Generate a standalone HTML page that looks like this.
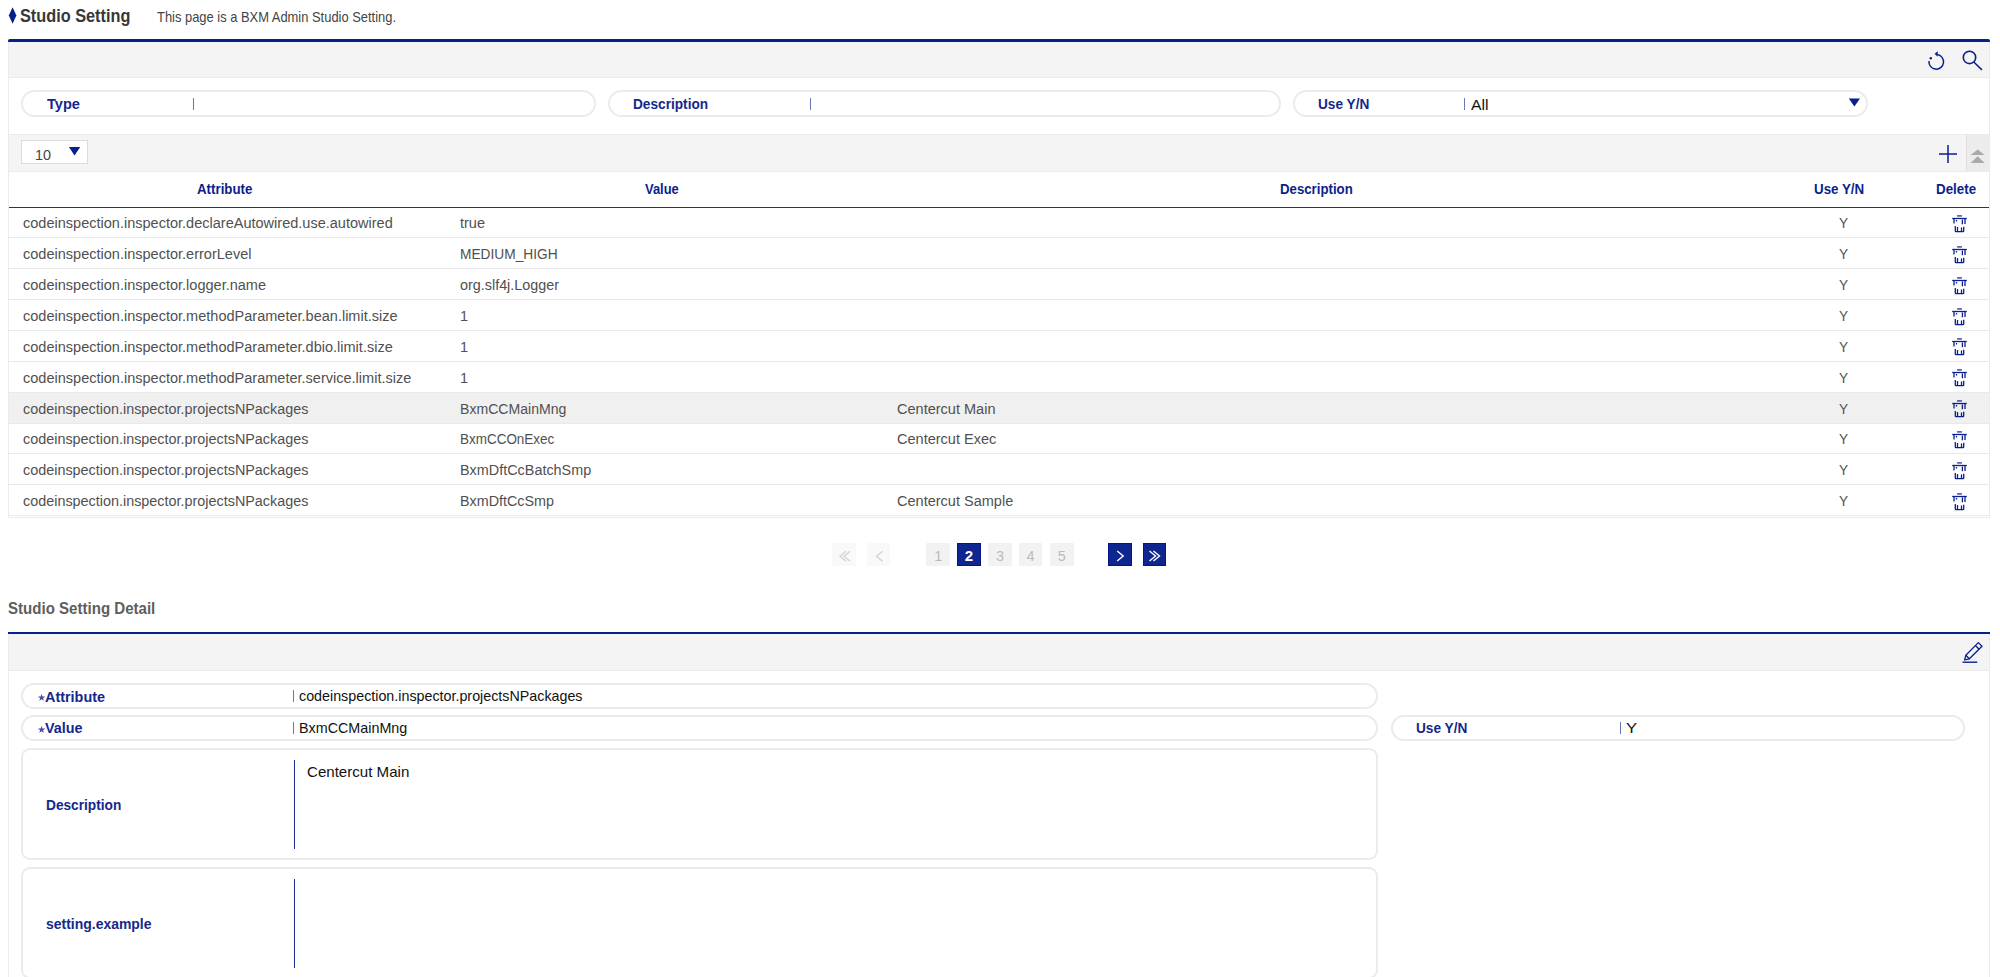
<!DOCTYPE html>
<html><head><meta charset="utf-8"><style>
html,body{margin:0;padding:0;background:#fff;width:2000px;height:977px;overflow:hidden;position:relative;font-family:"Liberation Sans", sans-serif;}
.t{position:absolute;white-space:pre;line-height:1;transform-origin:0 0;}
.a{position:absolute;box-sizing:border-box;}
svg{position:absolute;overflow:visible;}
</style></head><body>
<svg style="left:0;top:0" width="30" height="30"><path d="M12.6 7.2 L16.4 15.4 L12.6 23.7 L8.8 15.4 Z" fill="#0b1f8c"/></svg>
<div class="a" style="left:8px;top:39px;width:1982px;height:3px;background:#0b1f8c;border-radius:2px 2px 0 0"></div>
<div class="a" style="left:8px;top:42px;width:1982px;height:93px;border-left:1px solid #ebebeb;border-right:1px solid #ebebeb"></div>
<div class="a" style="left:9px;top:42px;width:1980px;height:36px;background:#f4f4f4;border-bottom:1px solid #ebebeb"></div>
<svg style="left:1920px;top:44px" width="32" height="32"><path d="M9 17 A7.3 7.3 0 1 0 17.2 10.6" fill="none" stroke="#0b1f8c" stroke-width="1.5"/><path d="M14.6 9.8 L17.8 7.2 L17.6 12.8 Z" fill="#0b1f8c"/><circle cx="10.8" cy="14.2" r="1.2" fill="#0b1f8c"/></svg>
<svg style="left:1955px;top:44px" width="32" height="32"><circle cx="14.5" cy="13.4" r="6.2" fill="none" stroke="#0b1f8c" stroke-width="1.6"/><path d="M18.8 18 L26.9 25.9" stroke="#0b1f8c" stroke-width="1.5"/></svg>
<div class="a" style="left:21px;top:90px;width:575px;height:27px;border:2px solid #ebebeb;border-radius:13.5px;background:#fff"></div>
<div class="a" style="left:193px;top:97.6px;width:1px;height:12px;background:#6b79b8"></div>
<div class="a" style="left:608px;top:90px;width:672.5px;height:27px;border:2px solid #ebebeb;border-radius:13.5px;background:#fff"></div>
<div class="a" style="left:809.5px;top:97.6px;width:1px;height:12px;background:#6b79b8"></div>
<div class="a" style="left:1293px;top:90px;width:574.5px;height:27px;border:2px solid #ebebeb;border-radius:13.5px;background:#fff"></div>
<div class="a" style="left:1464.2px;top:97.6px;width:1px;height:12px;background:#6b79b8"></div>
<svg style="left:1840px;top:90px" width="30" height="30"><path d="M8.8 8.6 L20 8.6 L14.4 16.5 Z" fill="#0b1f8c"/></svg>
<div class="a" style="left:8px;top:134px;width:1982px;height:384px;border-left:1px solid #ebebeb;border-right:1px solid #ebebeb;border-bottom:1px solid #ebebeb"></div>
<div class="a" style="left:9px;top:134px;width:1958px;height:38px;background:#f4f4f4;border-top:1px solid #ebebeb;border-bottom:1px solid #ebebeb"></div>
<div class="a" style="left:1966px;top:134px;width:24px;height:38px;background:#ececec;border-left:1px solid #e0e0e0;border-top:1px solid #ebebeb;border-bottom:1px solid #ebebeb"></div>
<div class="a" style="left:21px;top:140px;width:67px;height:24px;background:#fff;border:1px solid #dcdcdc"></div>
<svg style="left:60px;top:140px" width="30" height="30"><path d="M8.9 7.1 L20.2 7.1 L14.55 15.6 Z" fill="#0b1f8c"/></svg>
<svg style="left:1935px;top:141px" width="26" height="26"><path d="M13 4 V22 M4 13 H22" stroke="#0b1f8c" stroke-width="1.5"/></svg>
<svg style="left:1966px;top:144px" width="24" height="24"><path d="M4.6 11 L11.7 5.5 L18.7 11 Z M4.6 19.1 L11.7 12.3 L18.7 19.1 Z" fill="#aaaaaa"/></svg>
<div class="a" style="left:9px;top:207px;width:1980px;height:1px;background:#1a2e9c"></div>
<div class="a" style="left:9px;top:392.15px;width:1980px;height:30.87px;background:#f0f0f0"></div>
<div class="a" style="left:9px;top:237px;width:1980px;height:1px;background:#e9e9e9"></div>
<div class="a" style="left:9px;top:268px;width:1980px;height:1px;background:#e9e9e9"></div>
<div class="a" style="left:9px;top:299px;width:1980px;height:1px;background:#e9e9e9"></div>
<div class="a" style="left:9px;top:330px;width:1980px;height:1px;background:#e9e9e9"></div>
<div class="a" style="left:9px;top:361px;width:1980px;height:1px;background:#e9e9e9"></div>
<div class="a" style="left:9px;top:392px;width:1980px;height:1px;background:#e9e9e9"></div>
<div class="a" style="left:9px;top:423px;width:1980px;height:1px;background:#e9e9e9"></div>
<div class="a" style="left:9px;top:453px;width:1980px;height:1px;background:#e9e9e9"></div>
<div class="a" style="left:9px;top:484px;width:1980px;height:1px;background:#e9e9e9"></div>
<div class="a" style="left:9px;top:515px;width:1980px;height:1px;background:#e9e9e9"></div>
<svg style="left:1945px;top:210.00px" width="30" height="26"><g stroke="#0b1f8c" fill="none" stroke-width="1.3"><path d="M7.2 8.5 H21.8"/><path d="M12.1 5.9 H16.9" stroke-width="1.6" opacity="0.75"/><path d="M9 9 V13.5 M20 9 V14 M17.4 9.6 V14.2 M11.5 10 V11.5" /><path d="M10.3 16 V21 Q10.3 21.7 11 21.7 H18 Q18.7 21.7 18.7 21 V16.8 M12.5 17 V21.2 M16.5 17.5 V21.2"/></g></svg>
<svg style="left:1945px;top:240.87px" width="30" height="26"><g stroke="#0b1f8c" fill="none" stroke-width="1.3"><path d="M7.2 8.5 H21.8"/><path d="M12.1 5.9 H16.9" stroke-width="1.6" opacity="0.75"/><path d="M9 9 V13.5 M20 9 V14 M17.4 9.6 V14.2 M11.5 10 V11.5" /><path d="M10.3 16 V21 Q10.3 21.7 11 21.7 H18 Q18.7 21.7 18.7 21 V16.8 M12.5 17 V21.2 M16.5 17.5 V21.2"/></g></svg>
<svg style="left:1945px;top:271.74px" width="30" height="26"><g stroke="#0b1f8c" fill="none" stroke-width="1.3"><path d="M7.2 8.5 H21.8"/><path d="M12.1 5.9 H16.9" stroke-width="1.6" opacity="0.75"/><path d="M9 9 V13.5 M20 9 V14 M17.4 9.6 V14.2 M11.5 10 V11.5" /><path d="M10.3 16 V21 Q10.3 21.7 11 21.7 H18 Q18.7 21.7 18.7 21 V16.8 M12.5 17 V21.2 M16.5 17.5 V21.2"/></g></svg>
<svg style="left:1945px;top:302.61px" width="30" height="26"><g stroke="#0b1f8c" fill="none" stroke-width="1.3"><path d="M7.2 8.5 H21.8"/><path d="M12.1 5.9 H16.9" stroke-width="1.6" opacity="0.75"/><path d="M9 9 V13.5 M20 9 V14 M17.4 9.6 V14.2 M11.5 10 V11.5" /><path d="M10.3 16 V21 Q10.3 21.7 11 21.7 H18 Q18.7 21.7 18.7 21 V16.8 M12.5 17 V21.2 M16.5 17.5 V21.2"/></g></svg>
<svg style="left:1945px;top:333.48px" width="30" height="26"><g stroke="#0b1f8c" fill="none" stroke-width="1.3"><path d="M7.2 8.5 H21.8"/><path d="M12.1 5.9 H16.9" stroke-width="1.6" opacity="0.75"/><path d="M9 9 V13.5 M20 9 V14 M17.4 9.6 V14.2 M11.5 10 V11.5" /><path d="M10.3 16 V21 Q10.3 21.7 11 21.7 H18 Q18.7 21.7 18.7 21 V16.8 M12.5 17 V21.2 M16.5 17.5 V21.2"/></g></svg>
<svg style="left:1945px;top:364.35px" width="30" height="26"><g stroke="#0b1f8c" fill="none" stroke-width="1.3"><path d="M7.2 8.5 H21.8"/><path d="M12.1 5.9 H16.9" stroke-width="1.6" opacity="0.75"/><path d="M9 9 V13.5 M20 9 V14 M17.4 9.6 V14.2 M11.5 10 V11.5" /><path d="M10.3 16 V21 Q10.3 21.7 11 21.7 H18 Q18.7 21.7 18.7 21 V16.8 M12.5 17 V21.2 M16.5 17.5 V21.2"/></g></svg>
<svg style="left:1945px;top:395.22px" width="30" height="26"><g stroke="#0b1f8c" fill="none" stroke-width="1.3"><path d="M7.2 8.5 H21.8"/><path d="M12.1 5.9 H16.9" stroke-width="1.6" opacity="0.75"/><path d="M9 9 V13.5 M20 9 V14 M17.4 9.6 V14.2 M11.5 10 V11.5" /><path d="M10.3 16 V21 Q10.3 21.7 11 21.7 H18 Q18.7 21.7 18.7 21 V16.8 M12.5 17 V21.2 M16.5 17.5 V21.2"/></g></svg>
<svg style="left:1945px;top:426.09px" width="30" height="26"><g stroke="#0b1f8c" fill="none" stroke-width="1.3"><path d="M7.2 8.5 H21.8"/><path d="M12.1 5.9 H16.9" stroke-width="1.6" opacity="0.75"/><path d="M9 9 V13.5 M20 9 V14 M17.4 9.6 V14.2 M11.5 10 V11.5" /><path d="M10.3 16 V21 Q10.3 21.7 11 21.7 H18 Q18.7 21.7 18.7 21 V16.8 M12.5 17 V21.2 M16.5 17.5 V21.2"/></g></svg>
<svg style="left:1945px;top:456.96px" width="30" height="26"><g stroke="#0b1f8c" fill="none" stroke-width="1.3"><path d="M7.2 8.5 H21.8"/><path d="M12.1 5.9 H16.9" stroke-width="1.6" opacity="0.75"/><path d="M9 9 V13.5 M20 9 V14 M17.4 9.6 V14.2 M11.5 10 V11.5" /><path d="M10.3 16 V21 Q10.3 21.7 11 21.7 H18 Q18.7 21.7 18.7 21 V16.8 M12.5 17 V21.2 M16.5 17.5 V21.2"/></g></svg>
<svg style="left:1945px;top:487.83px" width="30" height="26"><g stroke="#0b1f8c" fill="none" stroke-width="1.3"><path d="M7.2 8.5 H21.8"/><path d="M12.1 5.9 H16.9" stroke-width="1.6" opacity="0.75"/><path d="M9 9 V13.5 M20 9 V14 M17.4 9.6 V14.2 M11.5 10 V11.5" /><path d="M10.3 16 V21 Q10.3 21.7 11 21.7 H18 Q18.7 21.7 18.7 21 V16.8 M12.5 17 V21.2 M16.5 17.5 V21.2"/></g></svg>
<div class="a" style="left:832.2px;top:542.6px;width:23.5px;height:23.4px;background:#f9f9f9;"></div>
<div class="a" style="left:866.8px;top:542.6px;width:23.5px;height:23.4px;background:#f9f9f9;"></div>
<div class="a" style="left:926.2px;top:542.6px;width:23.5px;height:23.4px;background:#f2f2f2;"></div>
<div class="a" style="left:988.3px;top:542.6px;width:23.5px;height:23.4px;background:#f2f2f2;"></div>
<div class="a" style="left:1018.9px;top:542.6px;width:23.5px;height:23.4px;background:#f2f2f2;"></div>
<div class="a" style="left:1050px;top:542.6px;width:23.5px;height:23.4px;background:#f2f2f2;"></div>
<div class="a" style="left:957.1px;top:542.6px;width:23.5px;height:23.4px;background:#0f2590;border:1px solid #03138a;"></div>
<div class="a" style="left:1108.3px;top:542.6px;width:23.5px;height:23.4px;background:#0f2590;border:1px solid #03138a;"></div>
<div class="a" style="left:1142.7px;top:542.6px;width:23.5px;height:23.4px;background:#0f2590;border:1px solid #03138a;"></div>
<svg style="left:0;top:0" width="1200" height="600"><path d="M1117.2 551 L1123.2 556 L1117.2 561" fill="none" stroke="#fff" stroke-width="1.4"/></svg>
<svg style="left:0;top:0" width="1200" height="600"><path d="M1149.5 551 L1155.5 556 L1149.5 561 M1153.5 551 L1159.5 556 L1153.5 561" fill="none" stroke="#fff" stroke-width="1.4"/></svg>
<svg style="left:0;top:0" width="1200" height="600"><path d="M846 551.2 L840 556.2 L846 561.2 M850 551.2 L844 556.2 L850 561.2" fill="none" stroke="#d2d2d2" stroke-width="1.3"/></svg>
<svg style="left:0;top:0" width="1200" height="600"><path d="M882.5 551.2 L876.5 556.2 L882.5 561.2" fill="none" stroke="#d2d2d2" stroke-width="1.3"/></svg>
<div class="a" style="left:8px;top:632px;width:1982px;height:2px;background:#0b1f8c"></div>
<div class="a" style="left:8px;top:634px;width:1982px;height:350px;border-left:1px solid #ebebeb;border-right:1px solid #ebebeb"></div>
<div class="a" style="left:9px;top:634px;width:1980px;height:37px;background:#f4f4f4;border-bottom:1px solid #ebebeb"></div>
<svg style="left:1955px;top:636px" width="32" height="32"><g fill="none" stroke="#0b1f8c" stroke-width="1.3" stroke-linejoin="round"><path d="M10.8 19.3 L23.3 6.6 L27 10.3 L14.4 22.8 Z"/><path d="M20.4 9.5 L24.1 13.2"/><path d="M10.8 19.3 L9.6 23.8 L14.4 22.8"/></g><path d="M7.5 26.2 H22.3" stroke="#0b1f8c" stroke-width="1.4"/></svg>
<div class="a" style="left:21px;top:683.3px;width:1357px;height:25.3px;border:2px solid #ebebeb;border-radius:13px;background:#fff"></div>
<div class="a" style="left:21px;top:715.4px;width:1357px;height:25.2px;border:2px solid #ebebeb;border-radius:13px;background:#fff"></div>
<div class="a" style="left:1391px;top:715.4px;width:574px;height:25.2px;border:2px solid #ebebeb;border-radius:13px;background:#fff"></div>
<div class="a" style="left:293px;top:690px;width:1px;height:11.6px;background:#6b79b8"></div>
<div class="a" style="left:293px;top:722px;width:1px;height:11.6px;background:#6b79b8"></div>
<div class="a" style="left:1619.5px;top:722px;width:1px;height:11.6px;background:#6b79b8"></div>
<svg style="left:38px;top:694.1px" width="8" height="8"><path d="M3.6 0 L4.5 2.5 L7.2 2.6 L5.1 4.2 L5.9 6.8 L3.6 5.3 L1.3 6.8 L2.1 4.2 L0 2.6 L2.7 2.5 Z" fill="#4350a6"/></svg>
<svg style="left:38px;top:726.1px" width="8" height="8"><path d="M3.6 0 L4.5 2.5 L7.2 2.6 L5.1 4.2 L5.9 6.8 L3.6 5.3 L1.3 6.8 L2.1 4.2 L0 2.6 L2.7 2.5 Z" fill="#4350a6"/></svg>
<div class="a" style="left:20.8px;top:748px;width:1357.2px;height:111.5px;border:2px solid #ebebeb;border-radius:9px;background:#fff"></div>
<div class="a" style="left:20.8px;top:866.7px;width:1357.2px;height:112.3px;border:2px solid #ebebeb;border-radius:9px;background:#fff"></div>
<div class="a" style="left:293.8px;top:760.2px;width:1.5px;height:89px;background:#1b2d8f"></div>
<div class="a" style="left:293.8px;top:879.3px;width:1.5px;height:89px;background:#1b2d8f"></div>
<div class="t" style="left:20.20px;top:7.79px;font-size:17.5px;font-weight:700;color:#383838;transform:scaleX(0.9308)">Studio Setting</div>
<div class="t" style="left:157.20px;top:10.27px;font-size:14.8px;font-weight:400;color:#444;transform:scaleX(0.8726)">This page is a BXM Admin Studio Setting.</div>
<div class="t" style="left:46.50px;top:96.28px;font-size:15.5px;font-weight:700;color:#14288c;transform:scaleX(0.9420)">Type</div>
<div class="t" style="left:633.40px;top:96.28px;font-size:15.5px;font-weight:700;color:#14288c;transform:scaleX(0.8808)">Description</div>
<div class="t" style="left:1318.00px;top:96.28px;font-size:15.5px;font-weight:700;color:#14288c;transform:scaleX(0.8797)">Use Y/N</div>
<div class="t" style="left:1471.20px;top:96.70px;font-size:15px;font-weight:400;color:#111;transform:scaleX(1.0557)">All</div>
<div class="t" style="left:34.70px;top:146.80px;font-size:15px;font-weight:400;color:#444;transform:scaleX(0.9588)">10</div>
<div class="t" style="left:197.40px;top:180.88px;font-size:15.5px;font-weight:700;color:#0b1f8c;transform:scaleX(0.8579)">Attribute</div>
<div class="t" style="left:645.11px;top:180.88px;font-size:15.5px;font-weight:700;color:#0b1f8c;transform:scaleX(0.8340)">Value</div>
<div class="t" style="left:1279.70px;top:180.88px;font-size:15.5px;font-weight:700;color:#0b1f8c;transform:scaleX(0.8532)">Description</div>
<div class="t" style="left:1814.00px;top:180.88px;font-size:15.5px;font-weight:700;color:#0b1f8c;transform:scaleX(0.8609)">Use Y/N</div>
<div class="t" style="left:1935.80px;top:180.88px;font-size:15.5px;font-weight:700;color:#0b1f8c;transform:scaleX(0.8618)">Delete</div>
<div class="t" style="left:23.30px;top:215.38px;font-size:15.5px;font-weight:400;color:#505050;transform:scaleX(0.9370)">codeinspection.inspector.declareAutowired.use.autowired</div>
<div class="t" style="left:460.20px;top:215.38px;font-size:15.5px;font-weight:400;color:#505050;transform:scaleX(0.9370)">true</div>
<div class="t" style="left:1838.60px;top:215.38px;font-size:15.5px;font-weight:400;color:#505050;transform:scaleX(0.8798)">Y</div>
<div class="t" style="left:23.30px;top:246.25px;font-size:15.5px;font-weight:400;color:#505050;transform:scaleX(0.9370)">codeinspection.inspector.errorLevel</div>
<div class="t" style="left:460.20px;top:246.25px;font-size:15.5px;font-weight:400;color:#505050;transform:scaleX(0.8860)">MEDIUM_HIGH</div>
<div class="t" style="left:1838.60px;top:246.25px;font-size:15.5px;font-weight:400;color:#505050;transform:scaleX(0.8798)">Y</div>
<div class="t" style="left:23.30px;top:277.12px;font-size:15.5px;font-weight:400;color:#505050;transform:scaleX(0.9370)">codeinspection.inspector.logger.name</div>
<div class="t" style="left:460.20px;top:277.12px;font-size:15.5px;font-weight:400;color:#505050;transform:scaleX(0.9270)">org.slf4j.Logger</div>
<div class="t" style="left:1838.60px;top:277.12px;font-size:15.5px;font-weight:400;color:#505050;transform:scaleX(0.8798)">Y</div>
<div class="t" style="left:23.30px;top:307.99px;font-size:15.5px;font-weight:400;color:#505050;transform:scaleX(0.9370)">codeinspection.inspector.methodParameter.bean.limit.size</div>
<div class="t" style="left:460.20px;top:307.99px;font-size:15.5px;font-weight:400;color:#505050;transform:scaleX(0.9370)">1</div>
<div class="t" style="left:1838.60px;top:307.99px;font-size:15.5px;font-weight:400;color:#505050;transform:scaleX(0.8798)">Y</div>
<div class="t" style="left:23.30px;top:338.86px;font-size:15.5px;font-weight:400;color:#505050;transform:scaleX(0.9370)">codeinspection.inspector.methodParameter.dbio.limit.size</div>
<div class="t" style="left:460.20px;top:338.86px;font-size:15.5px;font-weight:400;color:#505050;transform:scaleX(0.9370)">1</div>
<div class="t" style="left:1838.60px;top:338.86px;font-size:15.5px;font-weight:400;color:#505050;transform:scaleX(0.8798)">Y</div>
<div class="t" style="left:23.30px;top:369.73px;font-size:15.5px;font-weight:400;color:#505050;transform:scaleX(0.9370)">codeinspection.inspector.methodParameter.service.limit.size</div>
<div class="t" style="left:460.20px;top:369.73px;font-size:15.5px;font-weight:400;color:#505050;transform:scaleX(0.9370)">1</div>
<div class="t" style="left:1838.60px;top:369.73px;font-size:15.5px;font-weight:400;color:#505050;transform:scaleX(0.8798)">Y</div>
<div class="t" style="left:23.30px;top:400.60px;font-size:15.5px;font-weight:400;color:#505050;transform:scaleX(0.9280)">codeinspection.inspector.projectsNPackages</div>
<div class="t" style="left:460.20px;top:400.60px;font-size:15.5px;font-weight:400;color:#505050;transform:scaleX(0.9080)">BxmCCMainMng</div>
<div class="t" style="left:897.00px;top:400.60px;font-size:15.5px;font-weight:400;color:#505050;transform:scaleX(0.9370)">Centercut Main</div>
<div class="t" style="left:1838.60px;top:400.60px;font-size:15.5px;font-weight:400;color:#505050;transform:scaleX(0.8798)">Y</div>
<div class="t" style="left:23.30px;top:431.47px;font-size:15.5px;font-weight:400;color:#505050;transform:scaleX(0.9280)">codeinspection.inspector.projectsNPackages</div>
<div class="t" style="left:460.20px;top:431.47px;font-size:15.5px;font-weight:400;color:#505050;transform:scaleX(0.8690)">BxmCCOnExec</div>
<div class="t" style="left:897.00px;top:431.47px;font-size:15.5px;font-weight:400;color:#505050;transform:scaleX(0.9370)">Centercut Exec</div>
<div class="t" style="left:1838.60px;top:431.47px;font-size:15.5px;font-weight:400;color:#505050;transform:scaleX(0.8798)">Y</div>
<div class="t" style="left:23.30px;top:462.34px;font-size:15.5px;font-weight:400;color:#505050;transform:scaleX(0.9280)">codeinspection.inspector.projectsNPackages</div>
<div class="t" style="left:460.20px;top:462.34px;font-size:15.5px;font-weight:400;color:#505050;transform:scaleX(0.9290)">BxmDftCcBatchSmp</div>
<div class="t" style="left:1838.60px;top:462.34px;font-size:15.5px;font-weight:400;color:#505050;transform:scaleX(0.8798)">Y</div>
<div class="t" style="left:23.30px;top:493.21px;font-size:15.5px;font-weight:400;color:#505050;transform:scaleX(0.9280)">codeinspection.inspector.projectsNPackages</div>
<div class="t" style="left:460.20px;top:493.21px;font-size:15.5px;font-weight:400;color:#505050;transform:scaleX(0.9250)">BxmDftCcSmp</div>
<div class="t" style="left:897.00px;top:493.21px;font-size:15.5px;font-weight:400;color:#505050;transform:scaleX(0.9370)">Centercut Sample</div>
<div class="t" style="left:1838.60px;top:493.21px;font-size:15.5px;font-weight:400;color:#505050;transform:scaleX(0.8798)">Y</div>
<div class="t" style="left:934.16px;top:548.63px;font-size:14.5px;font-weight:400;color:#bbbbbb;transform:scaleX(1.0000)">1</div>
<div class="t" style="left:964.83px;top:548.20px;font-size:15px;font-weight:700;color:#ffffff;transform:scaleX(1.0000)">2</div>
<div class="t" style="left:995.96px;top:548.63px;font-size:14.5px;font-weight:400;color:#bbbbbb;transform:scaleX(1.0000)">3</div>
<div class="t" style="left:1026.56px;top:548.63px;font-size:14.5px;font-weight:400;color:#bbbbbb;transform:scaleX(1.0000)">4</div>
<div class="t" style="left:1057.66px;top:548.63px;font-size:14.5px;font-weight:400;color:#bbbbbb;transform:scaleX(1.0000)">5</div>
<div class="t" style="left:7.80px;top:600.03px;font-size:16.5px;font-weight:700;color:#5e5e5e;transform:scaleX(0.9130)">Studio Setting Detail</div>
<div class="t" style="left:45.00px;top:688.68px;font-size:15.5px;font-weight:700;color:#14288c;transform:scaleX(0.9291)">Attribute</div>
<div class="t" style="left:45.00px;top:720.38px;font-size:15.5px;font-weight:700;color:#14288c;transform:scaleX(0.9259)">Value</div>
<div class="t" style="left:299.20px;top:688.20px;font-size:15px;font-weight:400;color:#111;transform:scaleX(0.9524)">codeinspection.inspector.projectsNPackages</div>
<div class="t" style="left:299.20px;top:720.20px;font-size:15px;font-weight:400;color:#111;transform:scaleX(0.9554)">BxmCCMainMng</div>
<div class="t" style="left:1415.70px;top:720.38px;font-size:15.5px;font-weight:700;color:#14288c;transform:scaleX(0.8815)">Use Y/N</div>
<div class="t" style="left:1625.60px;top:720.20px;font-size:15px;font-weight:400;color:#111;transform:scaleX(1.1083)">Y</div>
<div class="t" style="left:46.00px;top:797.28px;font-size:15.5px;font-weight:700;color:#14288c;transform:scaleX(0.8831)">Description</div>
<div class="t" style="left:306.90px;top:764.40px;font-size:15px;font-weight:400;color:#111;transform:scaleX(1.0057)">Centercut Main</div>
<div class="t" style="left:46.00px;top:916.18px;font-size:15.5px;font-weight:700;color:#14288c;transform:scaleX(0.9005)">setting.example</div>
</body></html>
